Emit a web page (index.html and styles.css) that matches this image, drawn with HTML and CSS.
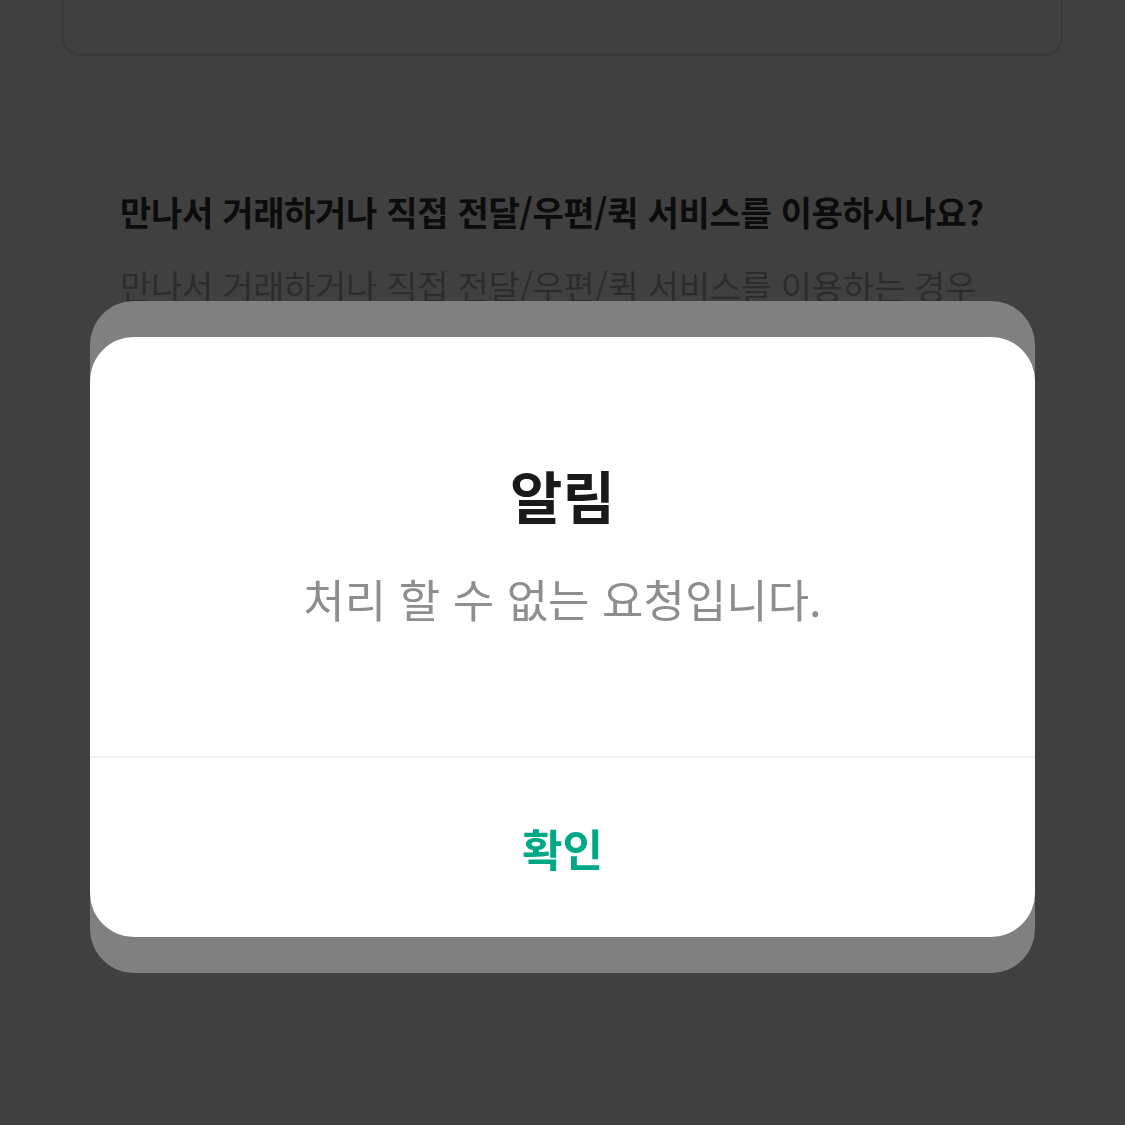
FILE: index.html
```html
<!DOCTYPE html>
<html lang="ko">
<head>
<meta charset="utf-8">
<link rel="stylesheet" href="styles.css">
</head>
<body>
<div class="page">
  <div class="top-card"></div>
  <section class="info">
    <h2 class="info-title">만나서 거래하거나 직접 전달/우편/퀵 서비스를 이용하시나요?</h2>
    <p class="info-text">만나서 거래하거나 직접 전달/우편/퀵 서비스를 이용하는 경우</p>
  </section>
</div>
<div class="overlay">
  <div class="sheet">
    <div class="dialog">
      <div class="dialog-body">
        <h1 class="dialog-title">알림</h1>
        <p class="dialog-msg">처리 할 수 없는 요청입니다.</p>
      </div>
      <button class="dialog-btn">확인</button>
    </div>
  </div>
</div>
</body>
</html>
```
FILE: styles.css
```css
* { box-sizing: border-box; }
html, body {
  margin: 0;
  padding: 0;
  background: #ffffff;
  font-family: "Noto Sans CJK KR", "Noto Sans", sans-serif;
}
.page {
  width: 1125px;
  height: 1125px;
  overflow: hidden;
  padding: 0 62px;
}
.top-card {
  height: 76px;
  margin-top: -20px;
  border: 2px solid #e4e4e4;
  border-radius: 0 0 18px 18px;
}
.info {
  padding: 133px 58px 0;
}
.info-title {
  margin: 0;
  font-size: 34px;
  font-weight: 700;
  line-height: 46px;
  color: #303030;
  letter-spacing: -0.3px;
  white-space: nowrap;
}
.info-text {
  margin: 28px 0 0;
  font-size: 34px;
  font-weight: 400;
  line-height: 46px;
  color: #b0b0b0;
  letter-spacing: -0.3px;
  white-space: nowrap;
}
.overlay {
  position: fixed;
  inset: 0;
  background: rgba(0, 0, 0, 0.75);
  display: flex;
  justify-content: center;
  padding-top: 301px;
}
.sheet {
  width: 945px;
  height: 672px;
  background: #808080;
  border-radius: 44px;
  padding: 36px 0;
}
.dialog {
  height: 600px;
  background: #ffffff;
  border-radius: 44px;
  display: flex;
  flex-direction: column;
  overflow: hidden;
}
.dialog-body {
  height: 421px;
  border-bottom: 2px solid #f2f2f2;
  display: flex;
  flex-direction: column;
  align-items: center;
  padding-top: 124px;
}
.dialog-title {
  margin: 0;
  font-size: 57px;
  font-weight: 700;
  line-height: 66px;
  color: #1a1a1a;
}
.dialog-msg {
  margin: 44px 0 0;
  font-size: 45px;
  font-weight: 400;
  line-height: 56px;
  color: #8e8e8e;
}
.dialog-btn {
  flex: 1;
  border: 0;
  background: transparent;
  font-family: inherit;
  font-size: 44px;
  font-weight: 700;
  color: #00a886;
  padding: 0;
}
```
